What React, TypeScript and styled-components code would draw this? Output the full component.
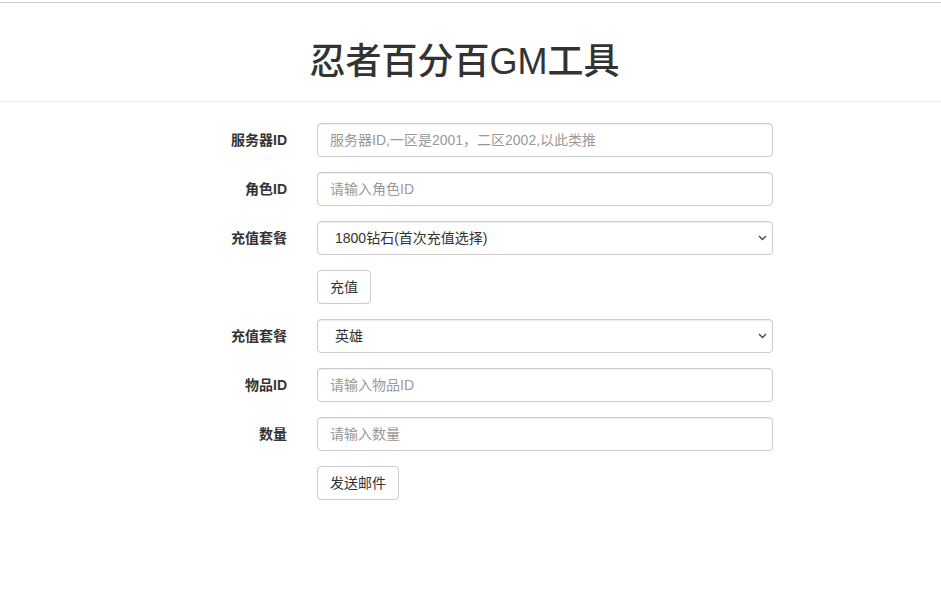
import React from "react";
import styled, { createGlobalStyle } from "styled-components";

const GlobalStyle = createGlobalStyle`
  html, body {
    margin: 0;
    padding: 0;
    background: #fff;
  }
  body {
    font-family: "Liberation Sans", Arial, "Noto Sans CJK SC", sans-serif;
    font-size: 14px;
    line-height: 1.42857;
    color: #333;
  }
  * {
    box-sizing: border-box;
  }
`;

const Header = styled.header`
  margin-top: 2px;
  border-top: 1px solid #cfcfcf;
  border-bottom: 1px solid #eee;
  padding: 39px 12px 19px 0;
  text-align: center;
`;

const Title = styled.h1`
  margin: 0;
  font-size: 36px;
  font-weight: 500;
  line-height: 1.1;
  color: #333;
`;

const Form = styled.form`
  padding-top: 21px;
`;

const Row = styled.div`
  display: grid;
  grid-template-columns: 287px 456px;
  column-gap: 30px;
  margin-bottom: 15px;
`;

const Label = styled.label`
  text-align: right;
  font-weight: 700;
  padding-top: 7px;
  line-height: 20px;
  color: #333;
`;

const fieldBase = `
  display: block;
  width: 100%;
  height: 34px;
  padding: 6px 12px;
  font-family: inherit;
  font-size: 14px;
  line-height: 20px;
  color: #555;
  background: #fff;
  border: 1px solid #ccc;
  border-radius: 4px;
  box-shadow: inset 0 1px 1px rgba(0, 0, 0, 0.075);
  outline: none;
`;

const Input = styled.input`
  ${fieldBase}
  &::placeholder {
    color: #999;
  }
`;

const SelectWrap = styled.div`
  position: relative;
`;

const Select = styled.select`
  ${fieldBase}
  appearance: none;
  padding-left: 17px;
  color: #333;
`;

const Chevron = styled.svg`
  position: absolute;
  right: 6px;
  top: 14px;
  width: 9px;
  height: 6px;
  pointer-events: none;
`;

const Button = styled.button`
  display: inline-block;
  justify-self: start;
  height: 34px;
  padding: 6px 12px;
  font-family: inherit;
  font-size: 14px;
  line-height: 20px;
  color: #333;
  background: #fff;
  border: 1px solid #ccc;
  border-radius: 4px;
  cursor: pointer;
`;

function SelectField({ options }: { options: string[] }) {
  return (
    <SelectWrap>
      <Select defaultValue={options[0]}>
        {options.map((o) => (
          <option key={o}>{o}</option>
        ))}
      </Select>
      <Chevron viewBox="0 0 9 6">
        <path d="M1 1 L4.5 4.5 L8 1" fill="none" stroke="#444" strokeWidth="1.3" />
      </Chevron>
    </SelectWrap>
  );
}

export default function App() {
  return (
    <>
      <GlobalStyle />
      <Header>
        <Title>忍者百分百GM工具</Title>
      </Header>
      <Form onSubmit={(e) => e.preventDefault()}>
        <Row>
          <Label>服务器ID</Label>
          <Input placeholder="服务器ID,一区是2001，二区2002,以此类推" />
        </Row>
        <Row>
          <Label>角色ID</Label>
          <Input placeholder="请输入角色ID" />
        </Row>
        <Row>
          <Label>充值套餐</Label>
          <SelectField options={["1800钻石(首次充值选择)", "钻石"]} />
        </Row>
        <Row>
          <span />
          <Button type="button">充值</Button>
        </Row>
        <Row>
          <Label>充值套餐</Label>
          <SelectField options={["英雄", "物品"]} />
        </Row>
        <Row>
          <Label>物品ID</Label>
          <Input placeholder="请输入物品ID" />
        </Row>
        <Row>
          <Label>数量</Label>
          <Input placeholder="请输入数量" />
        </Row>
        <Row>
          <span />
          <Button type="button">发送邮件</Button>
        </Row>
      </Form>
    </>
  );
}
